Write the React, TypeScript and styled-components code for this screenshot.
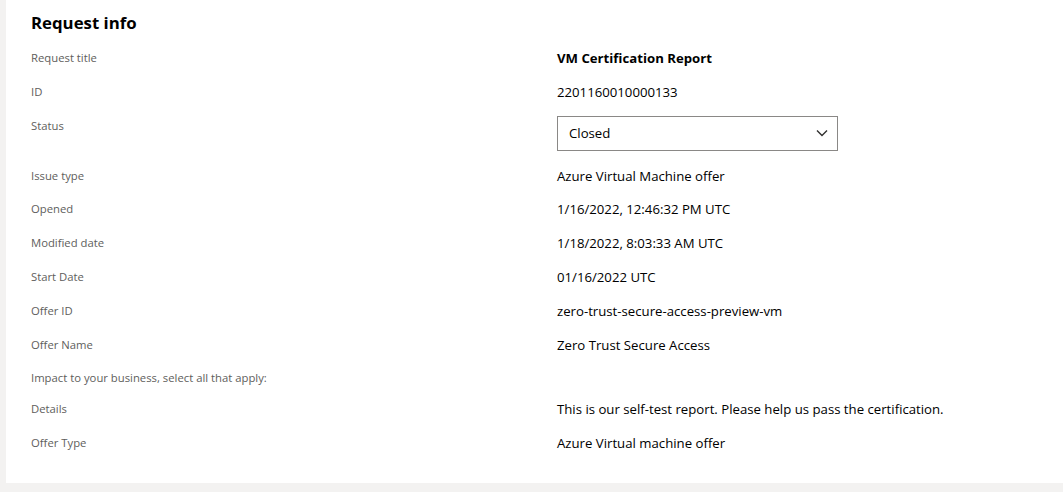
import React from "react";
import styled, { createGlobalStyle } from "styled-components";

const Global = createGlobalStyle`
  html, body { margin: 0; padding: 0; background: #f3f2f1; }
  body { font-family: "Open Sans", "Noto Sans", sans-serif; color: #000; }
`;

const Page = styled.div`
  display: flex;
  padding: 0 0 9px 6px;
  width: 1063px;
  box-sizing: border-box;
`;

const Panel = styled.section`
  flex: 1;
  background: #fff;
  padding: 11px 0 16px 25px;
`;

const Title = styled.h2`
  margin: 0 0 13px;
  font-size: 16.8px;
  line-height: 24px;
  font-weight: 700;
  color: #000;
`;

const Grid = styled.dl`
  display: grid;
  grid-template-columns: 526px 1fr;
  margin: 0;
`;

const Label = styled.dt`
  margin: 0;
  font-size: 11.3px;
  line-height: 17px;
  color: #605e5c;
  padding: 1px 0 13px;
`;

const Value = styled.dd<{ $bold?: boolean; $gap?: number }>`
  margin: 0;
  font-size: 13.2px;
  line-height: 20px;
  font-weight: ${(p) => (p.$bold ? 700 : 400)};
  color: #000;
  padding-bottom: ${(p) => p.$gap ?? 13.8}px;
`;

const Select = styled.div`
  display: flex;
  align-items: center;
  justify-content: space-between;
  box-sizing: border-box;
  width: 281px;
  height: 35px;
  padding: 0 9px 0 11px;
  border: 1px solid #8a8886;
  font-size: 13.2px;
`;

const rows: { label: string; value?: string; bold?: boolean; select?: boolean }[] = [
  { label: "Request title", value: "VM Certification Report", bold: true },
  { label: "ID", value: "2201160010000133" },
  { label: "Status", select: true, value: "Closed" },
  { label: "Issue type", value: "Azure Virtual Machine offer" },
  { label: "Opened", value: "1/16/2022, 12:46:32 PM UTC" },
  { label: "Modified date", value: "1/18/2022, 8:03:33 AM UTC" },
  { label: "Start Date", value: "01/16/2022 UTC" },
  { label: "Offer ID", value: "zero-trust-secure-access-preview-vm" },
  { label: "Offer Name", value: "Zero Trust Secure Access" },
  { label: "Impact to your business, select all that apply:" },
  { label: "Details", value: "This is our self-test report. Please help us pass the certification." },
  { label: "Offer Type", value: "Azure Virtual machine offer" },
];

export default function App() {
  return (
    <>
      <Global />
      <Page>
        <Panel>
          <Title>Request info</Title>
          <Grid>
            {rows.map((r) => (
              <React.Fragment key={r.label}>
                <Label>{r.label}</Label>
                {r.select ? (
                  <Value $gap={15}>
                    <Select>
                      <span>{r.value}</span>
                      <svg width="12" height="8" viewBox="0 0 12 8">
                        <path d="M1 1.5l5 5 5-5" fill="none" stroke="#323130" strokeWidth="1.4" />
                      </svg>
                    </Select>
                  </Value>
                ) : (
                  <Value $bold={r.bold}>{r.value ?? ""}</Value>
                )}
              </React.Fragment>
            ))}
          </Grid>
        </Panel>
      </Page>
    </>
  );
}
